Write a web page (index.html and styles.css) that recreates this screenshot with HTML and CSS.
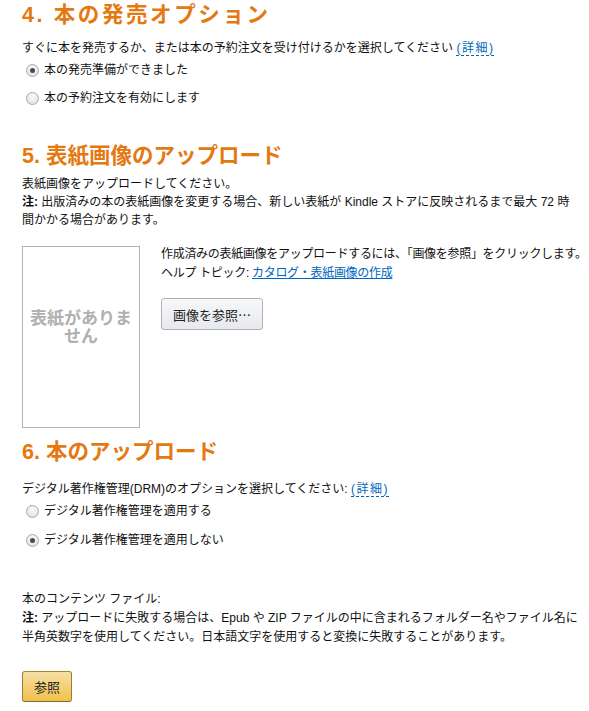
FILE: index.html
```html
<!DOCTYPE html>
<html lang="ja">
<head>
    <meta charset="UTF-8">
    <title>本の発売オプション</title>
    <link rel="stylesheet" href="styles.css">
</head>
<body>

<div class="page">

    <!-- 4. 発売オプション -->
    <div class="sec sec-release">
        <h2 class="sec-title">4. 本の発売オプション</h2>
        <p class="desc">すぐに本を発売するか、または本の予約注文を受け付けるかを選択してください <a href="#" class="more">(詳細)</a></p>
        <label class="opt"><input type="radio" name="release" checked> 本の発売準備ができました</label>
        <label class="opt opt-next"><input type="radio" name="release"> 本の予約注文を有効にします</label>
    </div>

    <!-- 5. 表紙画像 -->
    <div class="sec sec-cover">
        <h2 class="sec-title">5. 表紙画像のアップロード</h2>
        <p class="desc">表紙画像をアップロードしてください。<br>
            <b>注:</b> 出版済みの本の表紙画像を変更する場合、新しい表紙が Kindle ストアに反映されるまで最大 72 時間かかる場合があります。</p>

        <div class="cover">
            <div class="cover-box"><span>表紙がありません</span></div>
            <div class="cover-info">
                <p>作成済みの表紙画像をアップロードするには、「画像を参照」をクリックします。<br>
                    ヘルプ トピック: <a href="#" class="link">カタログ・表紙画像の作成</a></p>
                <button class="btn">画像を参照…</button>
            </div>
        </div>
    </div>

    <!-- 6. アップロード -->
    <div class="sec sec-upload">
        <h2 class="sec-title">6. 本のアップロード</h2>
        <p class="desc">デジタル著作権管理(DRM)のオプションを選択してください: <a href="#" class="more">(詳細)</a></p>
        <label class="opt"><input type="radio" name="drm"> デジタル著作権管理を適用する</label>
        <label class="opt opt-next2"><input type="radio" name="drm" checked> デジタル著作権管理を適用しない</label>

        <p class="desc file">本のコンテンツ ファイル:<br>
            <b>注:</b> アップロードに失敗する場合は、Epub や ZIP ファイルの中に含まれるフォルダー名やファイル名に半角英数字を使用してください。日本語文字を使用すると変換に失敗することがあります。</p>

        <button class="btn btn-yellow">参照</button>
    </div>

</div>

</body>
</html>
```

FILE: styles.css
```css
* {
    margin: 0;
    padding: 0;
}

body {
    font: 12px/18px "Liberation Sans", "Noto Sans CJK JP", sans-serif;
    color: #111;
    background: #fff;
}

a {
    text-decoration: none;
}

.page {
    padding: 0 0 0 22px;
}

.sec-title {
    font-size: 21.5px;
    line-height: 30px;
    font-weight: bold;
    color: #e47911;
}

.sec-release .sec-title {
    letter-spacing: 2.6px;
}

.desc {
    margin-top: 9px;
}

.desc b {
    color: #111;
}

.more {
    color: #0066c0;
    border-bottom: 1px dashed #0066c0;
    letter-spacing: 1.5px;
}

.link {
    color: #0066c0;
    text-decoration: underline;
}

/* radio rows */
.opt {
    display: flex;
    align-items: center;
    height: 22px;
    padding-left: 4px;
    margin-top: 2px;
}

.opt-next {
    margin-top: 6px;
}

.opt-next2 {
    margin-top: 7px;
}

.opt input {
    -webkit-appearance: none;
    appearance: none;
    width: 13px;
    height: 13px;
    margin-right: 5px;
    border: 1px solid #a9a9a9;
    border-radius: 50%;
    background: radial-gradient(circle at 50% 35%, #fbfbfb, #dcdcdc);
    position: relative;
}

.opt input:checked:after {
    content: "";
    position: absolute;
    left: 3px;
    top: 3px;
    width: 5px;
    height: 5px;
    border-radius: 50%;
    background: #4a4a4a;
}

/* section spacing */
.sec-cover {
    margin-top: 32px;
}

.sec-cover .desc {
    margin-top: 4px;
    max-width: 555px;
}

.cover {
    margin-top: 17px;
    display: flex;
    gap: 21px;
}

.cover-box {
    flex: none;
    width: 118px;
    height: 182px;
    box-sizing: border-box;
    border: 1px solid #b3b3b3;
    display: flex;
    align-items: center;
    justify-content: center;
    padding-bottom: 18px;
}

.cover-box span {
    font-size: 17px;
    line-height: 18px;
    font-weight: bold;
    color: #b0b0b0;
    text-align: center;
    padding: 0 3px;
}

.cover-info {
    margin-top: -1px;
    line-height: 19px;
    white-space: nowrap;
}

.cover-info p {
    letter-spacing: -0.3px;
}

.btn {
    margin-top: 15px;
    height: 32px;
    padding: 0 11px;
    font: 13px "Noto Sans CJK JP", sans-serif;
    color: #222;
    border: 1px solid #adb1b8;
    border-radius: 3px;
    background: linear-gradient(#f7f8fa, #e7e9ec);
    cursor: pointer;
}

.sec-upload {
    margin-top: 9px;
}

.sec-upload .desc {
    margin-top: 13px;
}

.sec-upload .desc.file {
    margin-top: 39px;
    line-height: 19px;
    padding-right: 2px;
}

.btn-yellow {
    margin-top: 24px;
    height: 31px;
    padding: 0 11px;
    border-color: #a88734 #9c7e31 #846a29;
    background: linear-gradient(#f7dfa5, #f0c14b);
}
```
